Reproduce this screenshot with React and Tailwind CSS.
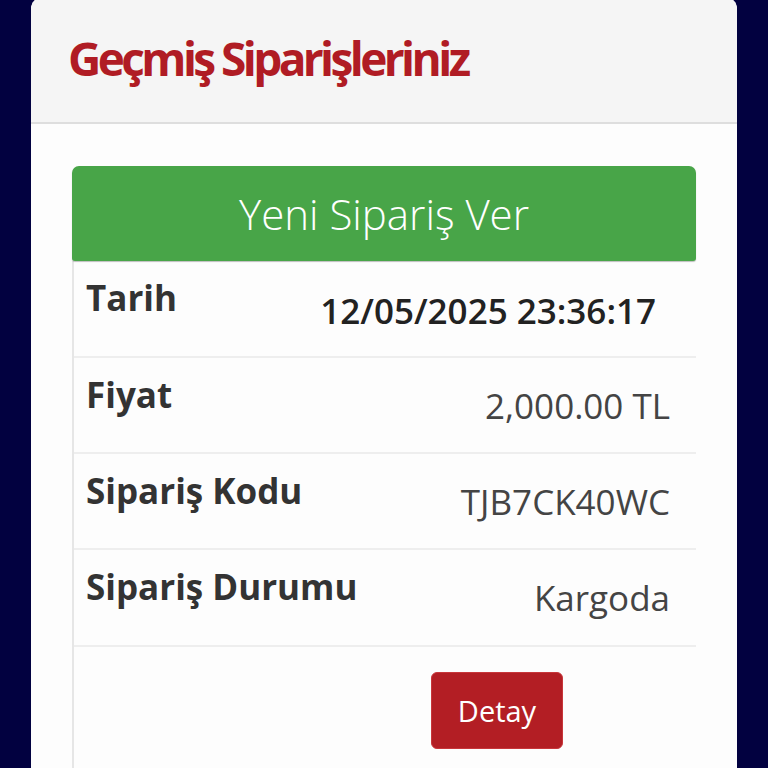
import React from 'react';

const rows = [
  { label: 'Tarih', value: '12/05/2025 23:36:17', strong: true, h: 'h-[97px]' },
  { label: 'Fiyat', value: '2,000.00 TL', h: 'h-[96px]' },
  { label: 'Sipariş Kodu', value: 'TJB7CK40WC', h: 'h-[96px]' },
  { label: 'Sipariş Durumu', value: 'Kargoda', h: 'h-[97px]' },
];

export default function App() {
  return (
    <div className="min-h-screen bg-[#020140] px-[31px] font-['Open_Sans',sans-serif] overflow-hidden">
      <div className="-mt-[3px] h-[771px] rounded-t-[12px] bg-[#fdfdfd] overflow-hidden">
        {/* header */}
        <div className="h-[127px] bg-[#f5f5f5] border-b-2 border-[#dedede] flex items-center px-[37px]">
          <h1 className="text-[46px] font-bold tracking-[-3.6px] text-[#b01c24] leading-none pb-[4px]">
            Geçmiş Siparişleriniz
          </h1>
        </div>

        <div className="px-[41px] pt-[42px]">
          <button className="w-full h-[95px] rounded-t-[7px] rounded-b-[3px] bg-[#48a548] text-white text-[42px] font-light shadow-[0_1px_1px_rgba(0,0,0,0.25)]">
            Yeni Sipariş Ver
          </button>

          <div className="border-l-2 border-[#e6e6e6]">
            {rows.map((r) => (
              <div key={r.label} className={`grid grid-cols-[224px_1fr] ${r.h} border-b-2 border-[#eeeeee]`}>
                <div className="pl-[12px] pt-[15px] text-[35px] font-bold text-[#333333] leading-[44px] whitespace-nowrap">
                  {r.label}
                </div>
                <div
                  className={
                    r.strong
                      ? 'pt-[28px] pr-[40px] text-right text-[35px] font-semibold text-[#222222] leading-[44px] whitespace-nowrap'
                      : 'pt-[26px] pr-[26px] text-right text-[35px] font-normal text-[#444444] leading-[44px] whitespace-nowrap'
                  }
                >
                  {r.value}
                </div>
              </div>
            ))}
            <div className="grid grid-cols-[224px_1fr] pt-[25px] pb-[30px]">
              <div />
              <div className="flex justify-center">
                <button className="w-[132px] h-[77px] rounded-[6px] bg-[#b31e24] border border-[#c8363a] text-white text-[29px] font-normal">
                  Detay
                </button>
              </div>
            </div>
          </div>
        </div>
      </div>
    </div>
  );
}
